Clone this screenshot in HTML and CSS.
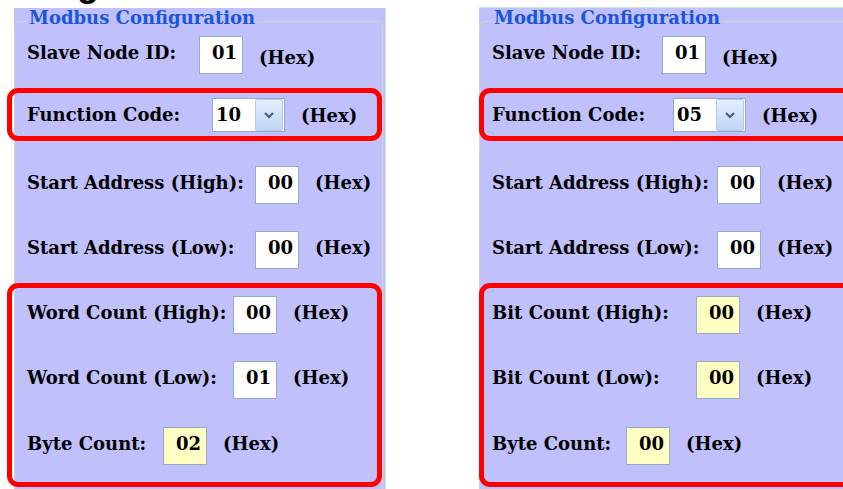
FILE: index.html
```html
<!DOCTYPE html>
<html>
<head>
<meta charset="utf-8">
<link rel="stylesheet" href="styles.css">
</head>
<body>
<div class="title"><span>Configuration</span></div>
<div class="stage">
  <div class="panel panel-a">
    <fieldset class="cfg">
      <legend>Modbus Configuration</legend>
      <div class="row r1"><span class="lbl w-slave">Slave Node ID:</span><div class="box">01</div><span class="unit low">(Hex)</span></div>
      <div class="mark m1">
        <div class="row rf"><span class="lbl w-func">Function Code:</span><div class="sel"><span class="sel-val">10</span><span class="sel-btn"><svg width="12" height="8" viewBox="0 0 12 8"><path d="M2 2 L6 6 L10 2" fill="none" stroke="#4d5e82" stroke-width="2.2"/></svg></span></div><span class="unit">(Hex)</span></div>
      </div>
      <div class="row r3"><span class="lbl w-start">Start Address (High):</span><div class="box">00</div><span class="unit">(Hex)</span></div>
      <div class="row r4"><span class="lbl w-start">Start Address (Low):</span><div class="box">00</div><span class="unit">(Hex)</span></div>
      <div class="mark m2">
        <div class="row"><span class="lbl w-count">Word Count (High):</span><div class="box">00</div><span class="unit">(Hex)</span></div>
        <div class="row r6"><span class="lbl w-count">Word Count (Low):</span><div class="box">01</div><span class="unit">(Hex)</span></div>
        <div class="row r7"><span class="lbl w-byte">Byte Count:</span><div class="box yel">02</div><span class="unit">(Hex)</span></div>
      </div>
    </fieldset>
  </div>
  <div class="panel panel-b">
    <fieldset class="cfg">
      <legend>Modbus Configuration</legend>
      <div class="row r1"><span class="lbl w-slave">Slave Node ID:</span><div class="box">01</div><span class="unit low">(Hex)</span></div>
      <div class="mark m1">
        <div class="row rf"><span class="lbl w-func">Function Code:</span><div class="sel"><span class="sel-val">05</span><span class="sel-btn"><svg width="12" height="8" viewBox="0 0 12 8"><path d="M2 2 L6 6 L10 2" fill="none" stroke="#4d5e82" stroke-width="2.2"/></svg></span></div><span class="unit">(Hex)</span></div>
      </div>
      <div class="row r3"><span class="lbl w-start">Start Address (High):</span><div class="box">00</div><span class="unit">(Hex)</span></div>
      <div class="row r4"><span class="lbl w-start">Start Address (Low):</span><div class="box">00</div><span class="unit">(Hex)</span></div>
      <div class="mark m2">
        <div class="row"><span class="lbl w-count">Bit Count (High):</span><div class="box yel">00</div><span class="unit">(Hex)</span></div>
        <div class="row r6"><span class="lbl w-count">Bit Count (Low):</span><div class="box yel">00</div><span class="unit">(Hex)</span></div>
        <div class="row r7"><span class="lbl w-byte">Byte Count:</span><div class="box yel">00</div><span class="unit">(Hex)</span></div>
      </div>
    </fieldset>
  </div>
</div>
</body>
</html>
```
FILE: styles.css
```css
html, body {
  margin: 0;
  padding: 0;
}
body {
  width: 843px;
  height: 489px;
  overflow: hidden;
  background: #ffffff;
  color: #000;
  font-family: "DejaVu Serif", "Liberation Serif", serif;
  font-weight: bold;
  font-size: 18px;
}
.title {
  height: 8px;
  overflow: hidden;
  font-family: "Liberation Sans", Arial, sans-serif;
  font-weight: bold;
  font-size: 36px;
  line-height: 36px;
  white-space: nowrap;
}
.title span {
  display: block;
  margin-top: -34px;
  margin-left: -15px;
}
.stage {
  display: flex;
  align-items: flex-start;
  gap: 93px;
  padding-left: 14px;
}
.panel {
  flex: 0 0 auto;
  width: 372px;
  height: 481px;
  box-sizing: border-box;
  background: #c0c0fc;
}
.panel-a {
  border-right: 1px solid #cdeecd;
}
.panel-b {
  margin-top: -1px;
  height: 482px;
  border-top: 1px solid #c6eec6;
}
.cfg {
  margin: 0 2px 0 0;
  padding: 0 0 0 12px;
  border: 1px solid #d2d3cb;
  border-radius: 6px;
  height: 520px;
  min-width: 0;
  box-sizing: border-box;
}
.cfg legend {
  padding: 0 2px 7px;
  line-height: 20px;
  color: #1a56d8;
  font-size: 18px;
}
.row {
  display: flex;
  align-items: center;
  height: 38px;
}
.lbl {
  flex: 0 0 auto;
  white-space: nowrap;
  margin-bottom: 5px;
}
.unit {
  flex: 0 0 auto;
  white-space: nowrap;
  margin-left: 16px;
  margin-bottom: 5px;
}
.unit.low {
  margin-bottom: 0;
  margin-top: 5px;
}
.box {
  flex: 0 0 auto;
  width: 44px;
  height: 38px;
  box-sizing: border-box;
  border: 1px solid #93abc5;
  background: #ffffff;
  display: flex;
  align-items: center;
  justify-content: flex-end;
  padding: 0 5px 5px 0;
}
.box.yel {
  background: #ffffc4;
}
.r1 { margin-top: 1px; }
.r3 { margin-top: 25px; }
.r4 { margin-top: 27px; }
.r6 { margin-top: 27px; }
.r7 { margin-top: 28px; }

.mark {
  width: 375px;
  box-sizing: border-box;
  border: 5px solid #ff0000;
  border-radius: 11px;
  margin-left: -20px;
  padding-left: 15px;
}
.panel-b .mark {
  margin-left: -13px;
  padding-left: 8px;
}
.m1 {
  margin-top: 14px;
  padding-top: 5px;
  padding-bottom: 4px;
}
.m2 {
  margin-top: 14px;
  padding-top: 8px;
  padding-bottom: 17px;
}
.rf {
  height: 34px;
}
.rf .lbl { margin-bottom: 2px; }
.rf .unit { margin-bottom: 0; }

.sel {
  flex: 0 0 auto;
  width: 73px;
  height: 34px;
  box-sizing: border-box;
  border: 1px solid #93abc5;
  background: #ffffff;
  display: flex;
  align-items: center;
}
.sel-val {
  flex: 1 1 auto;
  padding-left: 3px;
  margin-bottom: 2px;
}
.sel-btn {
  flex: 0 0 auto;
  width: 28px;
  height: 32px;
  margin-right: 1px;
  box-sizing: border-box;
  border: 1px solid #b3c8ec;
  border-radius: 2px;
  background: linear-gradient(#e4eefc, #c2d5f7);
  display: flex;
  align-items: center;
  justify-content: center;
}
.sel-btn svg { display: block; }

/* label column widths, left panel */
.panel-a .w-slave { width: 172px; }
.panel-a .w-func { width: 185px; }
.panel-a .w-start { width: 228px; }
.panel-a .w-count { width: 206px; }
.panel-a .w-byte { width: 136px; }
/* right panel */
.panel-b .w-slave { width: 170px; }
.panel-b .w-func { width: 181px; }
.panel-b .w-start { width: 225px; }
.panel-b .w-count { width: 204px; }
.panel-b .w-byte { width: 134px; }
```
